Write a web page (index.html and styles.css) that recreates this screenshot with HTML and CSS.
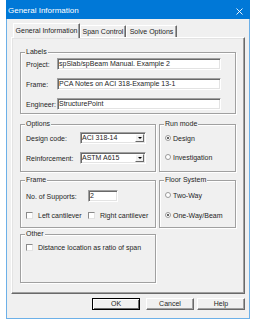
FILE: index.html
```html
<!DOCTYPE html>
<html>
<head>
<meta charset="utf-8">
<link rel="stylesheet" href="styles.css">
</head>
<body>
<div class="window">
  <div class="titlebar">
    <span class="title">General Information</span>
    <svg class="close" width="7" height="7" viewBox="0 0 7 7"><path d="M0.5 0.5L6.5 6.5M6.5 0.5L0.5 6.5" stroke="#fff" stroke-width="0.9" fill="none"/></svg>
  </div>
  <div class="client">
    <div class="tabs">
      <div class="tab tab-gen active">General Information</div>
      <div class="tab tab-span">Span Control</div>
      <div class="tab tab-solve">Solve Options</div>
    </div>
    <div class="panel">
      <div class="group g-labels">
        <div class="caption">Labels</div>
        <div class="field-row first"><span class="lbl lbl-labels">Project:</span><span class="edit edit-long">spSlab/spBeam Manual. Example 2</span></div>
        <div class="field-row"><span class="lbl lbl-labels">Frame:</span><span class="edit edit-long">PCA Notes on ACI 318-Example 13-1</span></div>
        <div class="field-row"><span class="lbl lbl-labels">Engineer:</span><span class="edit edit-long">StructurePoint</span></div>
      </div>

      <div class="group g-row2">
        <div class="caption">Options</div>
        <div class="field-row combo-first"><span class="lbl lbl-opt">Design code:</span><span class="combo"><span class="combo-text">ACI 318-14</span><span class="combo-btn"><span class="arrow"></span></span></span></div>
        <div class="field-row combo-second"><span class="lbl lbl-opt">Reinforcement:</span><span class="combo"><span class="combo-text">ASTM A615</span><span class="combo-btn"><span class="arrow"></span></span></span></div>
      </div>
      <div class="group g-row2">
        <div class="caption">Run mode</div>
        <div class="opt-row rm-1"><span class="radio checked"></span><span>Design</span></div>
        <div class="opt-row rm-2"><span class="radio"></span><span>Investigation</span></div>
      </div>

      <div class="group g-row3">
        <div class="caption">Frame</div>
        <div class="field-row sup-row"><span class="lbl lbl-sup">No. of Supports:</span><span class="edit edit-short">2</span></div>
        <div class="cb-line">
          <div class="opt-row cb-item cb-left"><span class="check"></span><span>Left cantilever</span></div>
          <div class="opt-row cb-item"><span class="check"></span><span>Right cantilever</span></div>
        </div>
      </div>
      <div class="group g-row3">
        <div class="caption">Floor System</div>
        <div class="opt-row fs-1"><span class="radio"></span><span>Two-Way</span></div>
        <div class="opt-row fs-2"><span class="radio checked"></span><span>One-Way/Beam</span></div>
      </div>

      <div class="group g-other">
        <div class="caption">Other</div>
        <div class="opt-row cb-item other-row"><span class="check"></span><span>Distance location as ratio of span</span></div>
      </div>
    </div>
    <div class="buttons">
      <div class="btn default">OK</div>
      <div class="btn btn-cancel">Cancel</div>
      <div class="btn">Help</div>
    </div>
  </div>
</div>
</body>
</html>
```
FILE: styles.css
```css
* { box-sizing: border-box; }

body {
  margin: 0;
  background: #fff;
  font-family: "Liberation Sans", Arial, sans-serif;
  font-size: 7px;
  color: #1e1e1e;
}

.window {
  margin-left: 6px;
  width: 244px;
  height: 319px;
  display: flex;
  flex-direction: column;
}

.titlebar {
  height: 19px;
  background: #0078d7;
  color: #fff;
  display: flex;
  align-items: center;
  justify-content: space-between;
  padding: 3px 7px 0 2px;
}

.title {
  font-size: 8px;
  line-height: 10px;
}

.close { display: block; }

.client {
  flex: 1;
  background: #f0f0f0;
  border: 1px solid #6cb0e8;
  border-top: none;
  padding: 4px 4px 0 4px;
  display: flex;
  flex-direction: column;
}

.tabs {
  display: flex;
  align-items: flex-end;
  height: 14px;
  padding-left: 2px;
}

.tab {
  height: 12px;
  line-height: 11px;
  text-align: center;
  white-space: nowrap;
  background: #f0f0f0;
  border-top: 1px solid #fff;
  border-left: 1px solid #fff;
  border-right: 1px solid #696969;
  box-shadow: inset -1px 0 0 #a0a0a0;
  border-radius: 1px 1px 0 0;
}

.tab.active {
  height: 15px;
  line-height: 13px;
  margin-bottom: -1px;
  position: relative;
  z-index: 1;
}

.tab-gen { width: 67px; }
.tab-span { width: 46px; line-height: 12px; }
.tab-solve { width: 51px; line-height: 12px; }

.panel {
  width: 234px;
  height: 257px;
  border: 1px solid;
  border-color: #fff #696969 #696969 #fff;
  box-shadow: inset -1px -1px 0 #a0a0a0, inset 1px 1px 0 #e3e3e3;
  padding: 14px 0 0 8px;
  display: grid;
  grid-template-columns: 136px 77px;
  column-gap: 3px;
  align-content: start;
  align-items: start;
}

.group {
  border: 1px solid #a0a0a0;
  box-shadow: 1px 1px 0 #fff, inset 1px 1px 0 #fff;
  padding-left: 5px;
}

.caption {
  width: max-content;
  height: 8px;
  line-height: 8px;
  margin: -5px 0 0 -1px;
  padding: 0 1px;
  background: #f0f0f0;
  position: relative;
}

.g-labels { grid-column: 1 / -1; height: 62px; }
.g-row2 { height: 48px; margin-top: 10px; }
.g-row3 { height: 48px; margin-top: 8px; }
.g-other { height: 49px; margin-top: 6px; }

.field-row {
  display: flex;
  align-items: center;
  height: 12px;
  margin-top: 8px;
  white-space: nowrap;
}
.field-row.first { margin-top: 2px; }

.lbl { display: block; }
.lbl-labels { width: 31px; }
.lbl-opt { width: 54px; }
.lbl-sup { width: 62px; }

.edit {
  display: block;
  height: 12px;
  line-height: 10px;
  padding-left: 1px;
  background: #fff;
  border: 1px solid;
  border-color: #a0a0a0 #fff #fff #a0a0a0;
  box-shadow: inset 1px 1px 0 #696969, inset -1px -1px 0 #e3e3e3;
  white-space: nowrap;
  overflow: hidden;
}
.edit-long { width: 164px; }
.edit-short { width: 30px; }

.combo {
  display: flex;
  width: 66px;
  height: 12px;
  padding: 1px;
  background: #fff;
  border: 1px solid;
  border-color: #a0a0a0 #fff #fff #a0a0a0;
  box-shadow: inset 1px 1px 0 #696969, inset -1px -1px 0 #e3e3e3;
}
.combo-text { flex: 1; line-height: 8px; }
.combo-btn {
  width: 9px;
  height: 8px;
  background: #f0f0f0;
  border: 1px solid;
  border-color: #fff #696969 #696969 #fff;
  display: flex;
  align-items: center;
  justify-content: center;
}
.arrow {
  width: 0;
  height: 0;
  border-left: 2px solid transparent;
  border-right: 2px solid transparent;
  border-top: 2px solid #000;
}

.combo-first { margin-top: 4px; }
.combo-second { margin-top: 8px; }

.opt-row {
  display: flex;
  align-items: center;
  gap: 2px;
  height: 10px;
  white-space: nowrap;
}

.rm-1 { margin-top: 5px; }
.rm-2 { margin-top: 9px; }
.fs-1 { margin-top: 6px; }
.fs-2 { margin-top: 10px; }

.sup-row { margin-top: 6px; }

.cb-line {
  display: flex;
  margin-top: 8px;
}
.cb-item { gap: 5px; }
.cb-left { width: 62px; }
.other-row { margin-top: 4px; }

.radio {
  width: 6px;
  height: 6px;
  border-radius: 50%;
  background: #fff;
  border: 1px solid #9a9a9a;
  display: flex;
  align-items: center;
  justify-content: center;
}
.radio.checked::after {
  content: "";
  width: 2px;
  height: 2px;
  border-radius: 50%;
  background: #333;
}

.check {
  width: 7px;
  height: 7px;
  background: #fff;
  border: 1px solid;
  border-color: #8a8a8a #e3e3e3 #e3e3e3 #8a8a8a;
}

.buttons {
  display: flex;
  justify-content: flex-end;
  margin-top: 4px;
}

.btn {
  width: 48px;
  height: 12px;
  line-height: 10px;
  text-align: center;
  background: #f0f0f0;
  border: 1px solid;
  border-color: #fff #696969 #696969 #fff;
  box-shadow: inset -1px -1px 0 #a0a0a0;
  margin-left: 3px;
}
.btn.default {
  margin-left: 0;
  border-color: #000;
  box-shadow: inset 1px 1px 0 #fff, inset -1px -1px 0 #696969;
}
.btn-cancel { margin-left: 6px; }
```
